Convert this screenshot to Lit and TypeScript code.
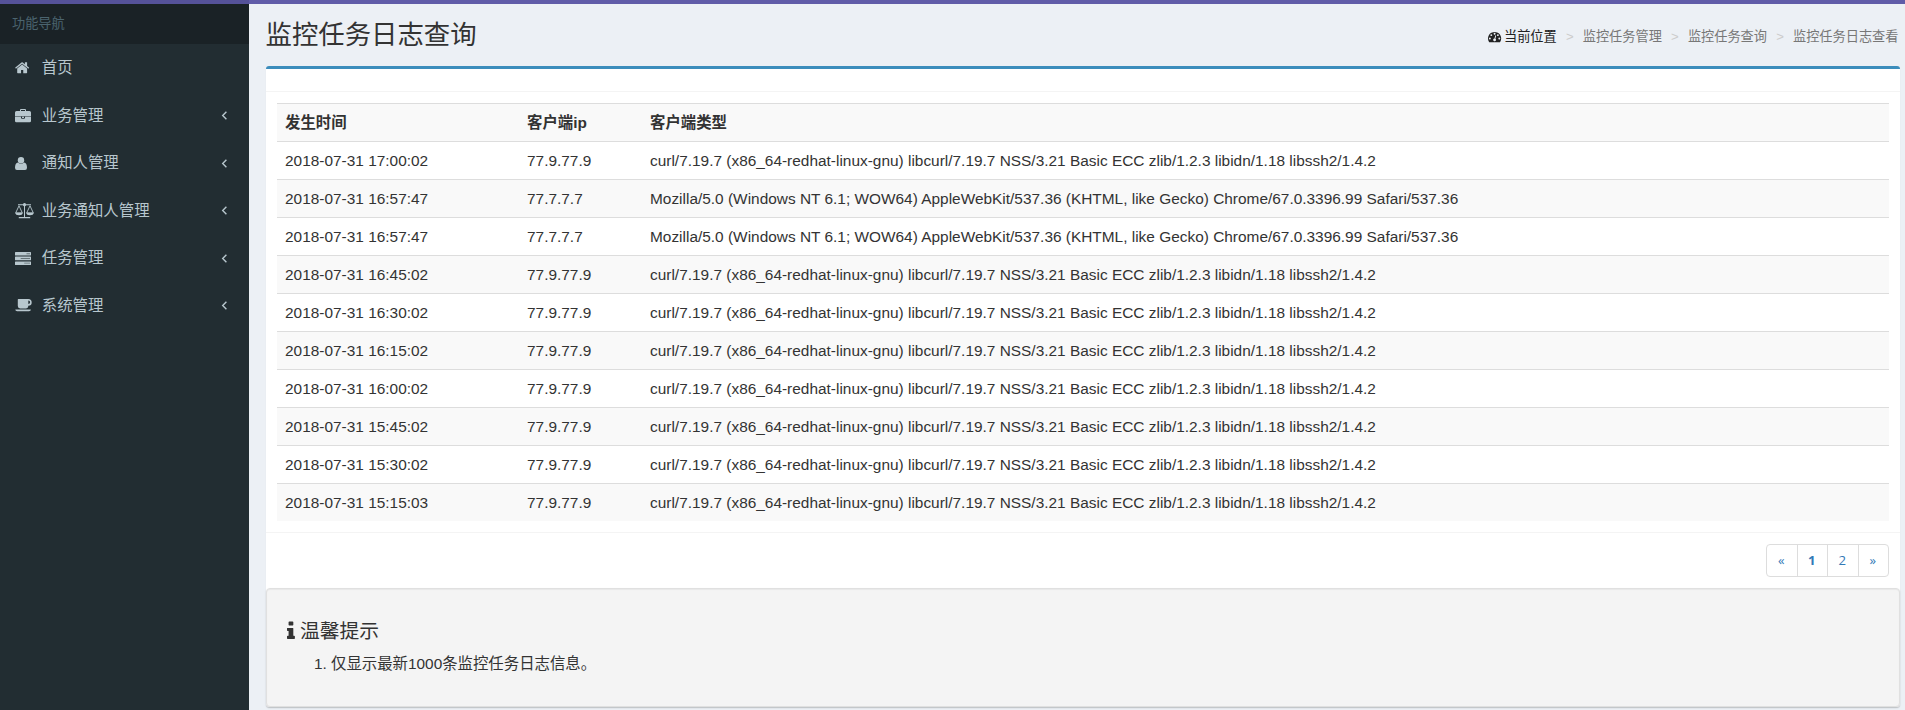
import { LitElement, html, svg, css } from "lit";
import { customElement } from "lit/decorators.js";

const glyph = (name: string) => {
  switch (name) {
    case "home":
      return { box: "64 0 1664 1792", w: 14.3, d: svg`<path d="M1472 992v480q0 26-19 45t-45 19h-384v-384h-256v384h-384q-26 0-45-19t-19-45v-480q0-1 .5-3t.5-3l575-474 575 474q1 2 1 6zm223-69l-62 74q-8 9-21 11h-3q-13 0-21-7l-692-577-692 577q-12 8-24 7-13-2-21-11l-62-74q-8-10-7-23.5t11-21.5l719-599q32-26 76-26t76 26l244 204v-195q0-14 9-23t23-9h192q14 0 23 9t9 23v408l219 182q10 8 11 21.5t-7 23.5z"/>` };
    case "briefcase":
      return { box: "0 0 16 14", w: 16, d: svg`<path fill-rule="evenodd" d="M5 2V1Q5 0 6 0H10Q11 0 11 1V2H14.5Q16 2 16 3.5V7.2H0V3.5Q0 2 1.500 2ZM6 1V2H10V1ZM0 7.800H6V8.800Q6 9.700 7 9.700H9Q10 9.700 10 8.800V7.800H16V12Q16 13.300 14.600 13.300H1.400Q0 13.300 0 12ZM7 7.800H9V8.900H7Z"/>` };
    case "user":
      return { box: "0 0 12 13", w: 12, d: svg`<circle cx="6" cy="3.200" r="3.200"/><path d="M3 5.500Q6 8 9 5.500Q12 6 12 10.800Q12 13 10 13H2Q0 13 0 10.800Q0 6 3 5.500Z"/>` };
    case "scale":
      return { box: "0 0 19 16", w: 19, d: svg`<path d="M3 1.300H8Q8.400 0 9.500 0T11 1.300H16V2.200H11Q10.700 3 10 3.300V14H15.200V15.200H3.800V14H9V3.300Q8.300 3 8 2.200H3Z"/><path fill="none" stroke="currentColor" stroke-width=".9" stroke-linejoin="round" d="M4 2.800L.7 9.900H7.300ZM15 2.800L11.700 9.900H18.300Z"/><path d="M.2 9.700H7.800Q7.400 12.200 4 12.200T.2 9.700ZM11.200 9.700H18.800Q18.400 12.200 15 12.200T11.200 9.700Z"/>` };
    case "tasks":
      return { box: "0 0 16 13", w: 16, d: svg`<rect y="0" width="16" height="3.500" rx=".5"/><rect y="4.600" width="16" height="3.700" rx=".5"/><rect y="9.400" width="16" height="3.500" rx=".5"/><path class="slit" d="M11.500 1.300H15V2.200H11.500ZM5.700 6H15V6.900H5.700ZM9.200 10.700H15V11.600H9.200Z"/>` };
    case "coffee":
      return { box: "0 0 17 13", w: 17, d: svg`<path fill-rule="evenodd" d="M3.400 0H13.300Q16.700 .1 16.700 3.400T13.300 6.700Q13.200 9.400 10.800 9.400H5.200Q2.800 9.400 2.800 7V.6Q2.800 0 3.400 0ZM13.300 1.600V5.100Q15.100 5 15.100 3.350T13.300 1.600ZM.3 10.500H15.900Q15.900 12.200 14 12.200H2.200Q.3 12.200 .3 10.500Z"/>` };
    case "dashboard":
      return { box: "0 0 1792 1792", w: 13.2, d: svg`<path d="M384 1152q0-53-37.5-90.5t-90.5-37.5-90.5 37.5-37.5 90.5 37.5 90.5 90.5 37.5 90.5-37.5 37.5-90.5zm192-448q0-53-37.5-90.5t-90.5-37.5-90.5 37.5-37.5 90.5 37.5 90.5 90.5 37.5 90.5-37.5 37.5-90.5zm428 481l101-382q6-26-7.5-48.5t-38.5-29.5-48 6.5-30 39.5l-101 382q-60 5-107 43.5t-63 98.5q-20 77 20 146t117 89 146-20 89-117q16-60-6-117t-72-91zm660-33q0-53-37.5-90.5t-90.5-37.5-90.5 37.5-37.5 90.5 37.5 90.5 90.5 37.5 90.5-37.5 37.5-90.5zm-640-640q0-53-37.5-90.5t-90.5-37.5-90.5 37.5-37.5 90.5 37.5 90.5 90.5 37.5 90.5-37.5 37.5-90.5zm448 192q0-53-37.5-90.5t-90.5-37.5-90.5 37.5-37.5 90.5 37.5 90.5 90.5 37.5 90.5-37.5 37.5-90.5zm320 448q0 261-141 483-19 29-54 29h-1402q-35 0-54-29-141-221-141-483 0-182 71-348t191-286 286-191 348-71 348 71 286 191 191 286 71 348z"/>` };
    default:
      return { box: "576 0 640 1792", w: 7.9, d: svg`<path d="M1216 1344v128q0 26-19 45t-45 19h-512q-26 0-45-19t-19-45v-128q0-26 19-45t45-19h64v-384h-64q-26 0-45-19t-19-45v-128q0-26 19-45t45-19h384q26 0 45 19t19 45v576h64q26 0 45 19t19 45zm-128-1152v192q0 26-19 45t-45 19h-256q-26 0-45-19t-19-45v-192q0-26 19-45t45-19h256q26 0 45 19t19 45z"/>` };
  }
};

const icon = (name: string) => {
  const g = glyph(name);
  return html`<svg class="icon ${name}" viewBox=${g.box} width=${g.w} aria-hidden="true">${g.d}</svg>`;
};

const MENU: [string, string][] = [
  ["home", "首页"],
  ["briefcase", "业务管理"],
  ["user", "通知人管理"],
  ["scale", "业务通知人管理"],
  ["tasks", "任务管理"],
  ["coffee", "系统管理"],
];

const CURL = "curl/7.19.7 (x86_64-redhat-linux-gnu) libcurl/7.19.7 NSS/3.21 Basic ECC zlib/1.2.3 libidn/1.18 libssh2/1.4.2";
const CHROME = "Mozilla/5.0 (Windows NT 6.1; WOW64) AppleWebKit/537.36 (KHTML, like Gecko) Chrome/67.0.3396.99 Safari/537.36";

const LOGS: [string, string, string][] = [
  ["17:00:02", "77.9.77.9", CURL],
  ["16:57:47", "77.7.7.7", CHROME],
  ["16:57:47", "77.7.7.7", CHROME],
  ["16:45:02", "77.9.77.9", CURL],
  ["16:30:02", "77.9.77.9", CURL],
  ["16:15:02", "77.9.77.9", CURL],
  ["16:00:02", "77.9.77.9", CURL],
  ["15:45:02", "77.9.77.9", CURL],
  ["15:30:02", "77.9.77.9", CURL],
  ["15:15:03", "77.9.77.9", CURL],
];

@customElement("app-root")
export class AppRoot extends LitElement {
  static styles = css`
    :host {
      display: flex;
      flex-direction: column;
      height: 710px;
      overflow: hidden;
      background: #ecf0f5;
      color: #333;
      font: 15.4px/22px "Liberation Sans", "Noto Sans CJK SC", sans-serif;
    }
    * { box-sizing: border-box; }
    .icon { fill: currentColor; overflow: visible; display: block; flex: none; }
    .slit { fill: #222d32; opacity: 0.55; }
    .topbar { height: 4px; flex: none; background: #605ca8; }
    .topbar::before { content: ""; display: block; width: 249px; height: 4px; background: #555299; }
    .body { flex: 1; display: flex; min-height: 0; }
    .sidebar { width: 249px; flex: none; background: #222d32; color: #b8c7ce; }
    .nav-title {
      height: 40px; padding: 0 12px 1px; background: #1a2226; color: #4b646f;
      font-size: 13.2px; display: flex; align-items: center;
    }
    .item { height: 47.5px; display: flex; align-items: center; padding: 0.8px 21px 0 15.4px; }
    .slot { width: 26.4px; display: flex; }
    .label { flex: 1; }
    .chevron { width: 7px; height: 9px; fill: none; stroke: currentColor; stroke-width: 1.4; }
    .main { flex: 1; min-width: 0; padding: 0 5px 0 17px; display: flex; flex-direction: column; }
    .head { height: 62px; display: flex; justify-content: space-between; }
    h1 { margin: 15px 0 0 -0.5px; font-size: 26.4px; line-height: 33px; font-weight: 400; }
    .crumbs { display: flex; align-items: center; height: 22px; margin: 22px 1.5px 0 0; font-size: 13.2px; color: #777; }
    .here { display: flex; align-items: center; gap: 3px; color: #222; }
    .sep { width: 26px; text-align: center; color: #ccc; }
    .box {
      border-top: 3px solid #3c8dbc; border-radius: 3px; background: #fff;
      box-shadow: 0 1px 1px rgba(0, 0, 0, 0.1);
    }
    .box-head { height: 23px; border-bottom: 1px solid #f4f4f4; }
    .box-body { padding: 11px; }
    .grid { width: 100%; border-collapse: separate; border-spacing: 0; table-layout: fixed; }
    .c1 { width: 242px; }
    .c2 { width: 123px; }
    th, td { height: 38px; padding: 0 8px; border-top: 1px solid #ddd; text-align: left; white-space: nowrap; }
    td { letter-spacing: 0.012px; }
    tr:nth-child(odd) > * { background: #f9f9f9; }
    .box-foot { border-top: 1px solid #f4f4f4; padding: 11px 11px; height: 56px; display: flex; justify-content: flex-end; }
    .pager { display: flex; height: 33px; border: 1px solid #ddd; border-radius: 4px; width: 123px; }
    .page {
      flex: 1; display: flex; align-items: center; justify-content: center; padding: 0 1px 2px 0;
      font: 13.2px "Open Sans", sans-serif; color: #337ab7;
    }
    .page + .page { border-left: 1px solid #ddd; }
    .current { font-weight: 700; }
    .well {
      height: 119px; padding: 30px 20px 0; background: #f4f4f4; border: 1px solid #e0e0e0;
      border-radius: 4px; box-shadow: inset 0 1px 1px rgba(0, 0, 0, 0.05), 0 1px 2px rgba(0, 0, 0, 0.12);
    }
    h4 { margin: 0; display: flex; align-items: center; gap: 5px; font-size: 19.8px; line-height: 24px; font-weight: 400; }
    ol { margin: 10px 0 0; padding: 0 0 0 44px; }
  `;

  render() {
    return html`
      <div class="topbar"></div>
      <div class="body">
        <nav class="sidebar">
          <div class="nav-title">功能导航</div>
          ${MENU.map(([name, label], i) => html`
            <div class="item">
              <span class="slot">${icon(name)}</span>
              <span class="label">${label}</span>
              ${i ? html`<svg class="chevron" viewBox="0 0 7 9"><path d="M5.4 .8L1.7 4.5L5.4 8.2"/></svg>` : null}
            </div>`)}
        </nav>
        <main class="main">
          <header class="head">
            <h1>监控任务日志查询</h1>
            <div class="crumbs">
              <span class="here">${icon("dashboard")}当前位置</span>
              ${["监控任务管理", "监控任务查询", "监控任务日志查看"].map((t) => html`<span class="sep">&gt;</span><span>${t}</span>`)}
            </div>
          </header>
          <section class="box">
            <div class="box-head"></div>
            <div class="box-body">
              <table class="grid">
                <colgroup><col class="c1"><col class="c2"><col></colgroup>
                <tbody>
                  <tr><th>发生时间</th><th>客户端ip</th><th>客户端类型</th></tr>
                  ${LOGS.map(([time, ip, agent]) => html`<tr><td>2018-07-31 ${time}</td><td>${ip}</td><td>${agent}</td></tr>`)}
                </tbody>
              </table>
            </div>
            <div class="box-foot">
              <div class="pager">
                <span class="page">«</span><span class="page current">1</span><span class="page">2</span><span class="page">»</span>
              </div>
            </div>
            <div class="well">
              <h4>${icon("info")}温馨提示</h4>
              <ol><li>仅显示最新1000条监控任务日志信息。</li></ol>
            </div>
          </section>
        </main>
      </div>
    `;
  }
}
